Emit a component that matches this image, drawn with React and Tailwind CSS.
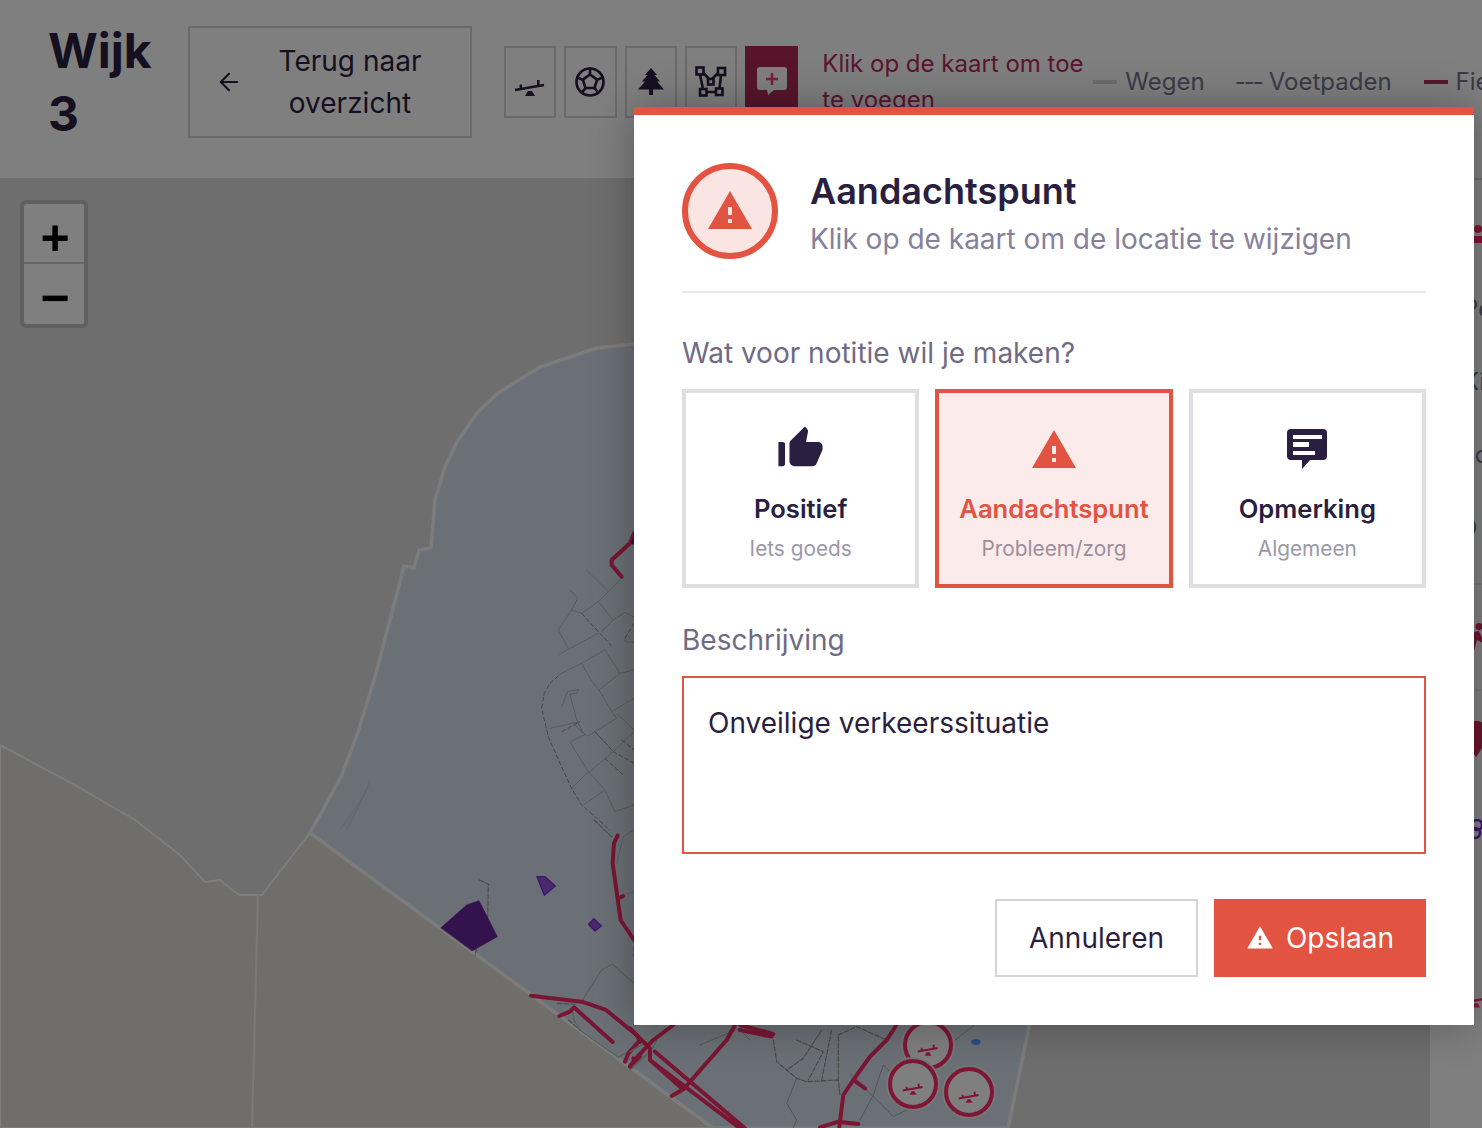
import { ArrowLeft } from 'lucide-react';
import { TbBallFootball } from 'react-icons/tb';

const WARNING = 'M1 21h22L12 2 1 21zm12-3h-2v-2h2v2zm0-4h-2v-4h2v4z';
const THUMB =
  'M2 20h2c.55 0 1-.45 1-1v-9c0-.55-.45-1-1-1H2v11zm19.83-7.12c.11-.25.17-.52.17-.8V11c0-1.1-.9-2-2-2h-5.5l.92-4.65c.05-.22.02-.46-.08-.66-.23-.45-.52-.86-.88-1.22L14 2 7.59 8.41C7.21 8.79 7 9.3 7 9.83v7.84C7 18.95 8.05 20 9.34 20h8.11c.7 0 1.36-.37 1.72-.97l2.66-6.15z';

function WarningIcon({ className }) {
  return (
    <svg viewBox="0 0 24 24" className={className} fill="currentColor">
      <path d={WARNING} />
    </svg>
  );
}

function ThumbIcon({ className }) {
  return (
    <svg viewBox="0 0 24 24" className={className} fill="currentColor">
      <path d={THUMB} />
    </svg>
  );
}

function NoteIcon({ className }) {
  return (
    <svg viewBox="0 0 48 48" className={className} fill="currentColor">
      <path
        fillRule="evenodd"
        d="M8 3h32a4 4 0 0 1 4 4v23a4 4 0 0 1-4 4H27l-8 9v-9H8a4 4 0 0 1-4-4V7a4 4 0 0 1 4-4zm2 6v4h29V9H10zm0 7v5h16v-5H10zm0 9v4h22v-4H10z"
      />
    </svg>
  );
}

function SeesawIcon({ className, color = 'currentColor' }) {
  return (
    <svg viewBox="0 0 32 32" className={className} fill="none" stroke={color} strokeWidth="2.5">
      <path d="M1 24L30 19M6.8 18.5V23M24.3 14V20" />
      <path d="M14 25h4l3 5H11z" fill={color} stroke="none" />
    </svg>
  );
}

function TreeIcon({ className }) {
  return (
    <svg viewBox="0 0 26 28" className={className} fill="currentColor">
      <path d="M13 0l6 7h-2.500l5.500 6.500h-3l7 8H15V27h-4v-5.500H0l7-8H4L9.500 7H7z" />
    </svg>
  );
}

function VectorIcon({ className }) {
  return (
    <svg viewBox="0 0 32 32" className={className} fill="none" stroke="currentColor" strokeWidth="2.600">
      <rect x="1.500" y="1.500" width="7" height="7" />
      <rect x="23" y="2" width="7" height="7" />
      <rect x="13" y="13" width="5.500" height="5.500" />
      <rect x="5" y="23" width="6.500" height="6.500" />
      <rect x="21" y="22.500" width="6.500" height="6.500" />
      <path d="M5 8.500L8 23M26 9l-1.500 13.500M11.500 26H21M8.500 7L14 13M23 7l-6 6" />
    </svg>
  );
}

function AddNoteIcon({ className }) {
  return (
    <svg viewBox="0 0 32 32" className={className}>
      <path d="M4 1h24a3 3 0 0 1 3 3v17a3 3 0 0 1-3 3H18l-6 5-1-5H4a3 3 0 0 1-3-3V4a3 3 0 0 1 3-3z" fill="#fff" />
      <path d="M16 7v12M10 13h12" stroke="#ff3a78" strokeWidth="2.600" fill="none" />
    </svg>
  );
}

function ToolButton({ children, active }) {
  return (
    <button
      className={
        active
          ? 'w-[53px] h-[72px] shrink-0 flex items-center justify-center bg-[#ae2a58]'
          : 'w-[52.33px] h-[72px] shrink-0 flex items-center justify-center border-2 border-[#d4d4d4] text-[#2a1f40]'
      }
    >
      {children}
    </button>
  );
}

function Header() {
  return (
    <header className="h-[180px] shrink-0 flex items-start gap-8 pl-12 pt-[19px] bg-white border-b-2 border-[#dedede] overflow-hidden">
      <h1 className="w-[108px] shrink-0 text-[48px] leading-[63px] font-bold text-[#2a1f40]">Wijk 3</h1>
      <button className="w-[284px] h-[112px] shrink-0 mt-[7px] flex items-center border-2 border-[#d4d4d4] pl-[25px] pr-[13px] text-[#2a1f40]">
        <ArrowLeft size={28} strokeWidth={1.8} className="shrink-0" />
        <span className="flex-1 text-center text-[28px] leading-[42px]">Terug naar overzicht</span>
      </button>
      <div className="flex items-center h-[126px] shrink-0">
        <div className="flex gap-2 shrink-0">
          <ToolButton>
            <SeesawIcon className="w-8 h-8" />
          </ToolButton>
          <ToolButton>
            <TbBallFootball size={36} strokeWidth={1.8} />
          </ToolButton>
          <ToolButton>
            <TreeIcon className="w-[26px] h-7" />
          </ToolButton>
          <ToolButton>
            <VectorIcon className="w-8 h-8" />
          </ToolButton>
          <ToolButton active>
            <AddNoteIcon className="w-8 h-8" />
          </ToolButton>
        </div>
        <p className="w-[271px] shrink-0 ml-6 text-[24px] leading-[36px] text-[#b52c5c]">
          Klik op de kaart om toe te voegen
        </p>
        <div className="flex items-center shrink-0 text-[24px] text-[#76748e] whitespace-nowrap">
          <span className="w-6 h-1 bg-[#d8d8d8] mr-2" />
          <span>Wegen</span>
          <span className="ml-[30px] tracking-[-2px]">---</span>
          <span className="ml-[7px]">Voetpaden</span>
          <span className="w-6 h-1 bg-[#b52c5c] ml-8 mr-2" />
          <span>Fietspaden</span>
        </div>
      </div>
    </header>
  );
}

function Playground({ x, y }) {
  return (
    <g transform={`translate(${x} ${y})`}>
      <circle r="27" fill="#ececec" />
      <circle r="23" fill="#fff" stroke="#fc2c6c" strokeWidth="4" />
      <svg x="-11" y="-10" width="22" height="22" viewBox="0 0 32 32" fill="none" stroke="#fc2c6c" strokeWidth="2.800">
        <path d="M1 24L30 19M6.800 18.500V23M24.300 14V20" />
        <path d="M14 25h4l3 5H11z" fill="#fc2c6c" stroke="none" />
      </svg>
    </g>
  );
}

function MapCanvas() {
  return (
    <svg viewBox="0 180 1430 948" className="absolute inset-0 w-full h-full">
      {/* land rond de wijk */}
      <path
        d="M0 745L75 785L135 820L180 855L205 882L220 880L232 890L240 895L262 895L285 865L310 833L713 1128H0Z"
        fill="#dedcd6"
        stroke="#fafafa"
        strokeWidth="2"
      />
      <path d="M258 895L252 1128" stroke="#f4f4f4" strokeWidth="2" fill="none" />

      {/* wijk */}
      <path
        d="M1029 344L634 344L597 348L540 367L498 393L477 413L457 442L445 467L435 500L431 548L419 550L414 568L404 566L390 620L375 677L358 732L342 775L310 833L713 1128L1008 1128L1029 1027Z"
        fill="#d6e0ec"
        stroke="#f8f8f8"
        strokeWidth="3.500"
      />

      {/* straten links */}
      <g transform="translate(300 330) scale(.3333)" fill="none" stroke="#a4a4a4" strokeWidth="2.200">
        <path d="M857 718L925 785L895 815L940 870M925 785L965 745M810 780L833 805L815 840L775 900L805 955M815 840L845 850L895 815" />
        <path d="M778 973L895 910M905 905L940 870L975 847L1002 862M975 925L975 935L1002 938M775 1035L845 1000L915 960L960 1030L1002 1020" />
        <path d="M845 1000L870 1045L897 1080L960 1030M897 1080L935 1145L1002 1105M935 1145L950 1165L885 1205L865 1218L850 1210L825 1185" />
        <path d="M803 1085L785 1130M803 1085L835 1078L830 1090L810 1092L830 1170L850 1210M750 1195L840 1175" />
        <path d="M950 1150L1002 1200M885 1205L940 1265M820 1230L855 1215M820 1230L812 1240L865 1325L915 1380L945 1445L1002 1425M865 1325L815 1375M915 1380L850 1425M940 1265L870 1325M940 1265L1002 1205" />
        <path d="M210 1350L190 1400L120 1500M205 1370L140 1500" stroke="#c4c8ce" />
        <g stroke="#8c8c8c" strokeWidth="3" strokeDasharray="14 6">
          <path d="M845 850L895 905L935 948M975 925L1002 880" />
          <path d="M775 1038L750 1060L733 1090L725 1135L745 1220L780 1300L815 1375L845 1425L930 1500" />
          <path d="M785 1205L840 1175M915 1285L970 1335M965 1230L1002 1260M885 1205L940 1265L1002 1300" />
        </g>
        <path d="M1002 610L990 640L935 690L935 705L965 740" stroke="#f42c66" strokeWidth="12" strokeLinecap="round" strokeLinejoin="round" />
        <circle cx="1004" cy="635" r="10" fill="#68249c" stroke="none" />
      </g>

      {/* straten, fietspaden en vlakken onderin */}
      <g transform="translate(300 820) scale(.3333)" fill="none" strokeLinecap="round" strokeLinejoin="round">
        <path d="M970 50L1002 30M950 130L970 50M980 222L1002 215" stroke="#b0b4ba" strokeWidth="2.500" />
        <g stroke="#969696" strokeWidth="3.500" strokeDasharray="14 6">
          <path d="M882 0L935 50M538 180L565 192L563 300M530 385L525 405M772 550L830 553M805 600L840 630M1002 380V410" />
        </g>
        <path d="M848 540L905 450L937 432L1002 490M818 575L822 600L840 630L955 712L975 700" stroke="#a8c4b0" strokeWidth="4" />
        <path d="M423 323L500 255L537 242L592 350L517 392Z" fill="#68249c" stroke="#68249c" strokeWidth="2" />
        <path d="M711 170L735 170L766 198L733 226Z" fill="#9454d8" stroke="#7c2cd0" strokeWidth="4" />
        <path d="M866 313L882 296L904 318L885 333Z" fill="#9454d8" stroke="#7c2cd0" strokeWidth="4" />
        <g stroke="#f42c66" strokeWidth="12">
          <path d="M953 47L942 70L938 130L962 300L1002 360M962 232L970 228" />
          <path d="M693 527L845 545L918 570L1010 645L1020 665M778 588L810 575L822 562L938 666" />
          <path d="M975 725L985 700L1020 660M990 738L1020 710M1000 715L1010 720" />
        </g>
      </g>

      <g transform="translate(630 1020) scale(.3333)" fill="none" strokeLinecap="round" strokeLinejoin="round">
        <path d="M210 75L340 20M340 40L360 60M500 175L470 250L500 300L490 322M660 160L700 200L790 290L830 270M690 300L730 225L760 135L800 175M975 60L1040 10" stroke="#a8a8a8" strokeWidth="3" />
        <g stroke="#909090" strokeWidth="3.500" strokeDasharray="14 6">
          <path d="M430 60L440 125L500 175L530 185L625 180M500 60L580 95L535 180M575 30L520 115L470 150M625 50L625 180L630 225M605 30L575 180M625 45L680 20L770 60" />
        </g>
        <path d="M0 150L65 90L80 60M0 95L50 65" stroke="#a8c4b0" strokeWidth="4" />
        <g stroke="#f42c66" strokeWidth="12">
          <path d="M125 228L160 208L290 60L315 15M330 15L430 42M330 30L425 50" />
          <path d="M0 25L60 85L60 120L155 205M75 95L345 325M60 120L330 325M0 140L15 118L70 60L130 15" />
          <path d="M800 15L770 60L720 110L670 180L640 225L628 320M670 180L705 205M570 322L625 305L685 312" />
        </g>
        <ellipse cx="1038" cy="66" rx="14" ry="9" fill="#5a9cff" />
      </g>

      <Playground x={928} y={1045} />
      <Playground x={913} y={1084} />
      <Playground x={969} y={1092} />
    </svg>
  );
}

function ZoomControl() {
  return (
    <div className="absolute left-5 top-5 w-[68px] border-4 border-[#c0c0c0] rounded-md bg-white text-black font-['Liberation_Sans',sans-serif] font-bold">
      <div className="h-[60px] pt-[10px] pl-[2px] flex items-center justify-center text-[50px] leading-none border-b-2 border-[#d0d0d0]">+</div>
      <div className="h-[60px] pt-2 pl-[2px] flex items-center justify-center text-[50px] leading-none">−</div>
    </div>
  );
}

function SidePanel() {
  return (
    <aside className="w-[52px] shrink-0 bg-white overflow-hidden pl-[33px] pt-[45px] text-[24px] leading-[73px] text-[#76748e] whitespace-nowrap">
      <svg viewBox="0 0 26 18" className="w-[26px] h-[18px] block" fill="#fc2c6c">
        <circle cx="15" cy="4" r="4" />
        <rect x="2" y="11" width="24" height="7" />
      </svg>
      <div className="mt-[29px]">Pe</div>
      <div>Ki</div>
      <div className="-ml-[6px]">Ho</div>
      <div className="-ml-1">O</div>
      <div className="h-[2px] w-full mt-[19px] bg-[#eeeeee]" />
      <svg viewBox="0 0 26 28" className="w-[26px] h-7 block mt-[38px]" fill="#d42a5c">
        <circle cx="16" cy="3.500" r="3.500" />
        <path d="M6 10l10-2 3 7 5 3v10h-4v-8l-6-3-3 11H7l2-12-3 1z" />
      </svg>
      <div className="h-[2px] w-full mt-[38px] bg-[#eeeeee]" />
      <svg viewBox="0 0 26 36" className="w-[26px] h-9 block mt-[30px]" fill="#d42a5c">
        <path d="M13 0c7 0 12 5 12 12 0 8-12 24-12 24S1 20 1 12C1 5 6 0 13 0z" />
      </svg>
      <svg viewBox="0 0 26 20" className="w-[26px] h-5 block mt-[62px]" fill="none" stroke="#7c2cd0" strokeWidth="2.500">
        <circle cx="14" cy="6" r="5" />
        <circle cx="12" cy="14" r="5" />
      </svg>
      <svg viewBox="0 0 32 32" className="w-[26px] h-[26px] block mt-[144px]" fill="none" stroke="#fc2c6c" strokeWidth="3">
        <path d="M1 24L30 19" />
        <path d="M14 25h4l3 5H11z" fill="#fc2c6c" stroke="none" />
      </svg>
    </aside>
  );
}

function NoteType({ icon, title, subtitle, active }) {
  return (
    <button
      className={
        active
          ? 'h-[199px] border-4 border-[#e25441] bg-[#fcebeb] pt-[33px] flex flex-col items-center'
          : 'h-[199px] border-4 border-[#dfdfe3] bg-white pt-[33px] flex flex-col items-center'
      }
    >
      <span className={active ? 'h-12 flex items-center justify-center text-[#e25441]' : 'h-12 flex items-center justify-center text-[#2a1f40]'}>
        {icon}
      </span>
      <span className={active ? 'mt-[18px] text-[25.6px] leading-[34px] font-semibold text-[#e25441]' : 'mt-[18px] text-[25.6px] leading-[34px] font-semibold text-[#2a1f40]'}>
        {title}
      </span>
      <span className={active ? 'mt-2 text-[20.8px] leading-[30px] text-[#9c8f9d]' : 'mt-2 text-[20.8px] leading-[30px] text-[#9b98a8]'}>
        {subtitle}
      </span>
    </button>
  );
}

function NoteDialog() {
  return (
    <div className="absolute left-[634px] top-[107px] w-[840px] bg-white border-t-8 border-[#e25441] p-12 shadow-[0_0_40px_rgba(0,0,0,0.3)]">
      <div className="flex items-start gap-8 h-24">
        <div className="w-24 h-24 rounded-full bg-[#fbe5e2] border-[6px] border-[#e25441] flex items-center justify-center text-[#e25441]">
          <WarningIcon className="w-12 h-12" />
        </div>
        <div className="pt-1">
          <h2 className="text-[36px] leading-[48px] font-semibold text-[#2a1f40]">Aandachtspunt</h2>
          <p className="mt-[3px] text-[28px] leading-[42px] text-[#85819a]">Klik op de kaart om de locatie te wijzigen</p>
        </div>
      </div>
      <div className="h-[2px] mt-8 bg-[#e9e9e9]" />

      <p className="mt-[39px] mb-[15px] text-[28px] leading-[42px] text-[#6f6b84]">Wat voor notitie wil je maken?</p>
      <div className="grid grid-cols-3 gap-4">
        <NoteType icon={<ThumbIcon className="w-[53px] h-[53px] -mt-1" />} title="Positief" subtitle="Iets goeds" />
        <NoteType icon={<WarningIcon className="w-12 h-12" />} title="Aandachtspunt" subtitle="Probleem/zorg" active />
        <NoteType icon={<NoteIcon className="w-12 h-12" />} title="Opmerking" subtitle="Algemeen" />
      </div>

      <p className="mt-[31px] mb-[15px] text-[28px] leading-[42px] text-[#6f6b84]">Beschrijving</p>
      <textarea
        readOnly
        defaultValue="Onveilige verkeerssituatie"
        className="block w-full h-[178px] border-2 border-[#e25441] px-6 py-6 text-[28px] leading-[42px] text-[#2a1f40] resize-none outline-none"
      />

      <div className="mt-[45px] flex justify-end gap-4">
        <button className="w-[203px] h-[78px] border-2 border-[#d4d4dc] text-[28px] text-[#2a1f40]">Annuleren</button>
        <button className="w-[212px] h-[78px] bg-[#e25441] text-white text-[28px] flex items-center justify-center gap-3">
          <WarningIcon className="w-7 h-7" />
          Opslaan
        </button>
      </div>
    </div>
  );
}

export default function App() {
  return (
    <div className="relative w-[1482px] h-[1128px] overflow-hidden flex flex-col bg-white font-[Inter,sans-serif]">
      <Header />
      <div className="flex flex-1 min-h-0">
        <main className="relative flex-1 bg-[#dcdcdc] overflow-hidden">
          <MapCanvas />
          <ZoomControl />
        </main>
        <SidePanel />
      </div>
      <div className="absolute inset-0 bg-black/50" />
      <NoteDialog />
    </div>
  );
}
